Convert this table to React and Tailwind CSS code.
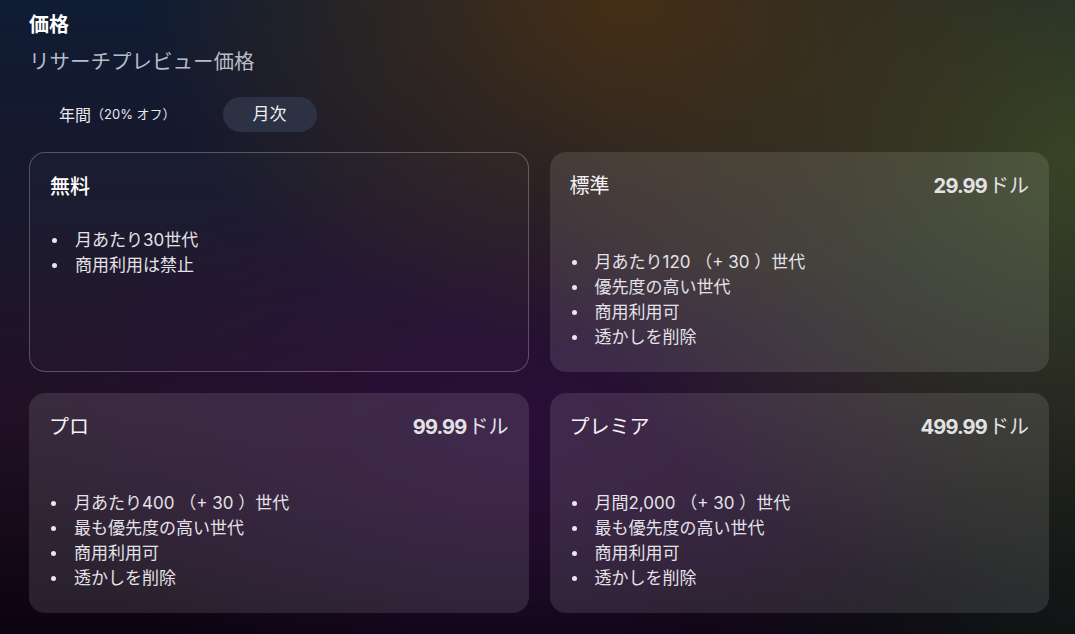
import React from 'react'

const plans = [
  {
    name: "標準",
    price: "29.99",
    features: ["月あたり120 （+ 30 ）世代", "優先度の高い世代", "商用利用可", "透かしを削除"],
  },
  {
    name: "プロ",
    price: "99.99",
    features: ["月あたり400 （+ 30 ）世代", "最も優先度の高い世代", "商用利用可", "透かしを削除"],
  },
  {
    name: "プレミア",
    price: "499.99",
    features: ["月間2,000 （+ 30 ）世代", "最も優先度の高い世代", "商用利用可", "透かしを削除"],
  },
]

const FeatureList = ({ items, className }) => (
  <ul className={"text-[17px] leading-[25px] text-[#e4e2e8] " + className}>
    {items.map((item, index) => (
      <li key={index} className="flex items-center">
        <span className="w-[25px] shrink-0 flex items-center">
          <span className="ml-[2px] size-[5px] rounded-full bg-[#e8e6ec]" />
        </span>
        {item}
      </li>
    ))}
  </ul>
)

const App = () => {
  return (
    <div className="min-h-screen w-full overflow-hidden bg-[#120a18] bg-[image:radial-gradient(ellipse_45%_55%_at_58%_0%,rgba(72,48,20,0.95),transparent),radial-gradient(ellipse_50%_70%_at_100%_25%,rgba(58,70,36,0.95),transparent),radial-gradient(ellipse_45%_45%_at_48%_68%,rgba(42,14,58,0.9),transparent),radial-gradient(ellipse_35%_60%_at_100%_95%,rgba(18,24,22,0.9),transparent),linear-gradient(to_bottom,#0f1c33_0%,#1a162a_40%,#221026_65%,#0b0410_100%)] font-['Inter','Noto_Sans_CJK_JP',sans-serif] text-white pl-[29px] pr-[26px] pt-[11px]">
      <h1 className="text-[20px] leading-[28px] font-bold text-white">価格</h1>
      <p className="mt-[9px] text-[20.5px] leading-[28px] text-[#b8bcc6]">リサーチプレビュー価格</p>

      {/* 年間 / 月次 */}
      <div className="mt-[21px] flex items-center gap-[17px]">
        <button className="h-[35px] px-[30px] rounded-full text-[16px] text-[#e8e8ec] flex items-center">
          年間<span className="text-[13px]">（20% オフ）</span>
        </button>
        <button className="h-[35px] px-[30px] rounded-full bg-[#2c3244] text-[17px] text-[#eceef2] flex items-center">
          月次
        </button>
      </div>

      <div className="mt-[20px] grid grid-cols-2 gap-[21px]">
        <div className="h-[220px] rounded-2xl border border-white/25 bg-white/[0.02] p-5">
          <h3 className="text-[20px] leading-[28px] font-medium text-white">無料</h3>
          <FeatureList className="mt-[27px]" items={["月あたり30世代", "商用利用は禁止"]} />
        </div>

        {plans.map((plan, index) => (
          <div key={index} className="h-[220px] rounded-2xl bg-white/[0.11] p-5">
            <div className="flex items-center justify-between">
              <h3 className="text-[20px] leading-[28px] text-[#f4f2f6]">{plan.name}</h3>
              <p className="text-[20px] leading-[28px] text-[#e2e2e4]">
                <span className="font-bold tracking-[-0.04em]">{plan.price}</span>
                <span className="ml-[2px]">ドル</span>
              </p>
            </div>
            <FeatureList className="mt-[50px]" items={plan.features} />
          </div>
        ))}
      </div>
    </div>
  )
}

export default App
